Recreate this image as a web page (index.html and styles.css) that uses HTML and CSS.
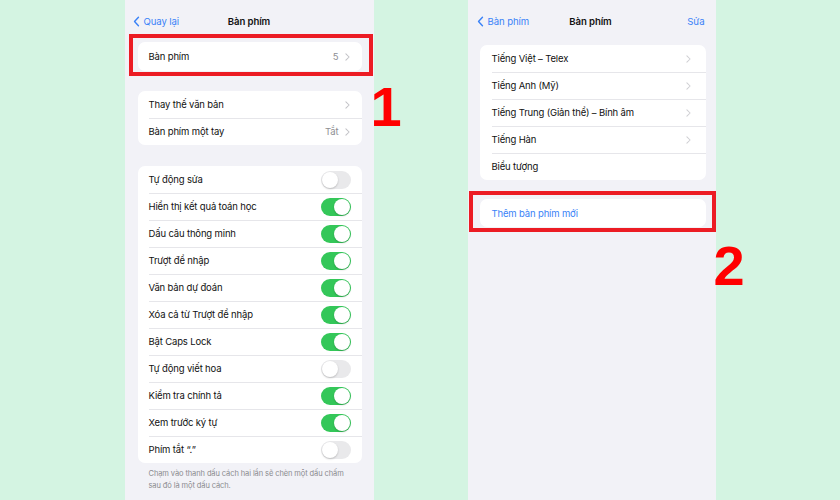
FILE: index.html
```html
<!DOCTYPE html>
<html lang="vi">
<head>
  <meta charset="UTF-8" />
  <meta name="viewport" content="width=device-width, initial-scale=1.0"/>
  <title>Bàn phím</title>
  <link rel="stylesheet" href="styles.css">
</head>
<body>
  <div class="stage">
    <!-- Màn hình 1 -->
    <div class="phone phone-left">
      <div class="nav">
        <a class="back"><svg class="back-icon" viewBox="0 0 8 14"><path d="M6.5 1.5 1.5 7l5 5.5"/></svg>Quay lại</a>
        <div class="nav-title">Bàn phím</div>
      </div>

      <div class="highlight hl-1">
        <div class="card">
          <div class="row row-tall"><span class="label">Bàn phím</span><span class="value">5</span><svg class="chev" viewBox="0 0 6 10"><path d="M1 1l4 4-4 4"/></svg></div>
        </div>
      </div>

      <div class="card group-2">
        <div class="row"><span class="label">Thay thế văn bản</span><svg class="chev" viewBox="0 0 6 10"><path d="M1 1l4 4-4 4"/></svg></div>
        <div class="row"><span class="label">Bàn phím một tay</span><span class="value">Tắt</span><svg class="chev" viewBox="0 0 6 10"><path d="M1 1l4 4-4 4"/></svg></div>
      </div>

      <div class="card group-3">
        <div class="row"><span class="label">Tự động sửa</span><span class="toggle"></span></div>
        <div class="row"><span class="label">Hiển thị kết quả toán học</span><span class="toggle on"></span></div>
        <div class="row"><span class="label">Dấu câu thông minh</span><span class="toggle on"></span></div>
        <div class="row"><span class="label">Trượt để nhập</span><span class="toggle on"></span></div>
        <div class="row"><span class="label">Văn bản dự đoán</span><span class="toggle on"></span></div>
        <div class="row"><span class="label">Xóa cả từ Trượt để nhập</span><span class="toggle on"></span></div>
        <div class="row"><span class="label">Bật Caps Lock</span><span class="toggle on"></span></div>
        <div class="row"><span class="label">Tự động viết hoa</span><span class="toggle"></span></div>
        <div class="row"><span class="label">Kiểm tra chính tả</span><span class="toggle on"></span></div>
        <div class="row"><span class="label">Xem trước ký tự</span><span class="toggle on"></span></div>
        <div class="row"><span class="label">Phím tắt “.”</span><span class="toggle"></span></div>
      </div>
      <p class="footnote">Chạm vào thanh dấu cách hai lần sẽ chèn một dấu chấm sau đó là một dấu cách.</p>

      <div class="step step-1">1</div>
    </div>

    <!-- Màn hình 2 -->
    <div class="phone phone-right">
      <div class="nav nav-2">
        <a class="back"><svg class="back-icon" viewBox="0 0 8 14"><path d="M6.5 1.5 1.5 7l5 5.5"/></svg>Bàn phím</a>
        <div class="nav-title">Bàn phím</div>
        <a class="edit">Sửa</a>
      </div>

      <div class="card list-2">
        <div class="row"><span class="label">Tiếng Việt – Telex</span><svg class="chev light" viewBox="0 0 6 10"><path d="M1 1l4 4-4 4"/></svg></div>
        <div class="row"><span class="label">Tiếng Anh (Mỹ)</span><svg class="chev light" viewBox="0 0 6 10"><path d="M1 1l4 4-4 4"/></svg></div>
        <div class="row"><span class="label">Tiếng Trung (Giản thể) – Bính âm</span><svg class="chev light" viewBox="0 0 6 10"><path d="M1 1l4 4-4 4"/></svg></div>
        <div class="row"><span class="label">Tiếng Hàn</span><svg class="chev light" viewBox="0 0 6 10"><path d="M1 1l4 4-4 4"/></svg></div>
        <div class="row"><span class="label">Biểu tượng</span></div>
      </div>

      <div class="highlight hl-2">
        <div class="card">
          <div class="row row-add"><span class="label link">Thêm bàn phím mới</span></div>
        </div>
      </div>

      <div class="step step-2">2</div>
    </div>
  </div>
</body>
</html>
```

FILE: styles.css
```css
body {
  margin: 0;
  padding: 0;
  background-color: #d4f4e2;
  font-family: 'Inter', 'Noto Sans', sans-serif;
  color: #111;
  overflow: hidden;
}

.stage {
  display: flex;
  justify-content: center;
  gap: 94px;
  height: 500px;
}

.phone {
  position: relative;
  background-color: #f2f2f7;
  height: 500px;
  display: flex;
  flex-direction: column;
}

.phone-left {
  width: 249px;
  padding: 0 12px 0 13px;
  box-sizing: border-box;
}

.phone-right {
  width: 248px;
  padding: 0 10px 0 12px;
  box-sizing: border-box;
}

/* barra de navegación */
.nav {
  position: relative;
  height: 34px;
  padding-top: 4px;
  display: flex;
  align-items: center;
  font-size: 9.6px;
  letter-spacing: -0.1px;
  margin: 0 -4px 0 -5px;
}

.nav-2 {
  height: 42px;
  padding-top: 0;
  margin: 0 1px 0 -3px;
}

.back {
  display: flex;
  align-items: center;
  gap: 4px;
  color: #3a82f7;
}

.back-icon {
  width: 7px;
  height: 11px;
  fill: none;
  stroke: #3a82f7;
  stroke-width: 1.8;
  stroke-linecap: round;
  stroke-linejoin: round;
}

.nav-title {
  position: absolute;
  left: 0;
  right: 0;
  text-align: center;
  font-weight: 600;
  pointer-events: none;
}

.edit {
  margin-left: auto;
  color: #3a82f7;
}

/* tarjetas */
.card {
  background-color: #fff;
  border-radius: 7px;
  overflow: hidden;
}

.row {
  height: 27px;
  display: flex;
  align-items: center;
  padding: 0 12px 0 11px;
  font-size: 9.5px;
  letter-spacing: -0.15px;
  position: relative;
}

.row + .row::before {
  content: '';
  position: absolute;
  top: 0;
  left: 11px;
  right: 0;
  height: 1px;
  background-color: #e6e6ea;
}

.row-tall {
  height: 29px;
}

.label {
  flex: 1;
  white-space: nowrap;
}

.value {
  color: #8e8e93;
  margin-right: 6px;
}

.chev {
  width: 5px;
  height: 8px;
  fill: none;
  stroke: #c2c2c6;
  stroke-width: 1.3;
  stroke-linecap: round;
  stroke-linejoin: round;
}

.chev.light {
  stroke: #cfcfd3;
  margin-right: 3px;
}

.list-2 .row,
.row-add {
  padding-left: 12px;
}

.list-2 .row + .row::before {
  left: 12px;
}

.link {
  color: #3a82f7;
}

/* recuadros rojos */
.highlight {
  border: 4px solid #ec1c24;
}

.hl-1 {
  margin: -4px -11px 0 -9px;
  padding: 4px 7px 1px 5px;
}

.hl-2 {
  margin: 11px -10px 0 -11px;
  padding: 4px 6px 1px 7px;
}

.row-add {
  height: 28px;
}

.group-2 {
  margin-top: 15px;
}

.group-3 {
  margin-top: 21px;
}

.list-2 {
  margin-top: 3px;
}

/* interruptores */
.toggle {
  width: 30px;
  height: 18px;
  border-radius: 9px;
  background-color: #e9e9eb;
  position: relative;
  margin-right: -1px;
}

.toggle::after {
  content: '';
  position: absolute;
  top: 1px;
  left: 1px;
  width: 16px;
  height: 16px;
  border-radius: 50%;
  background-color: #fff;
  box-shadow: 0 1px 2px rgba(0, 0, 0, 0.2);
}

.toggle.on {
  background-color: #34c759;
}

.toggle.on::after {
  left: 13px;
}

.footnote {
  margin: 5px 0 0;
  padding: 0 6px 0 11px;
  font-size: 7.5px;
  letter-spacing: -0.1px;
  line-height: 12px;
  color: #8a8a8e;
}

/* números */
.step {
  position: absolute;
  left: 100%;
  font-family: 'Liberation Sans', Arial, sans-serif;
  font-weight: 700;
  font-size: 56px;
  line-height: 1;
  color: #ff0000;
}

.step-1 {
  top: 79px;
  margin-left: -3px;
}

.step-2 {
  top: 238px;
  margin-left: -2px;
}
```
